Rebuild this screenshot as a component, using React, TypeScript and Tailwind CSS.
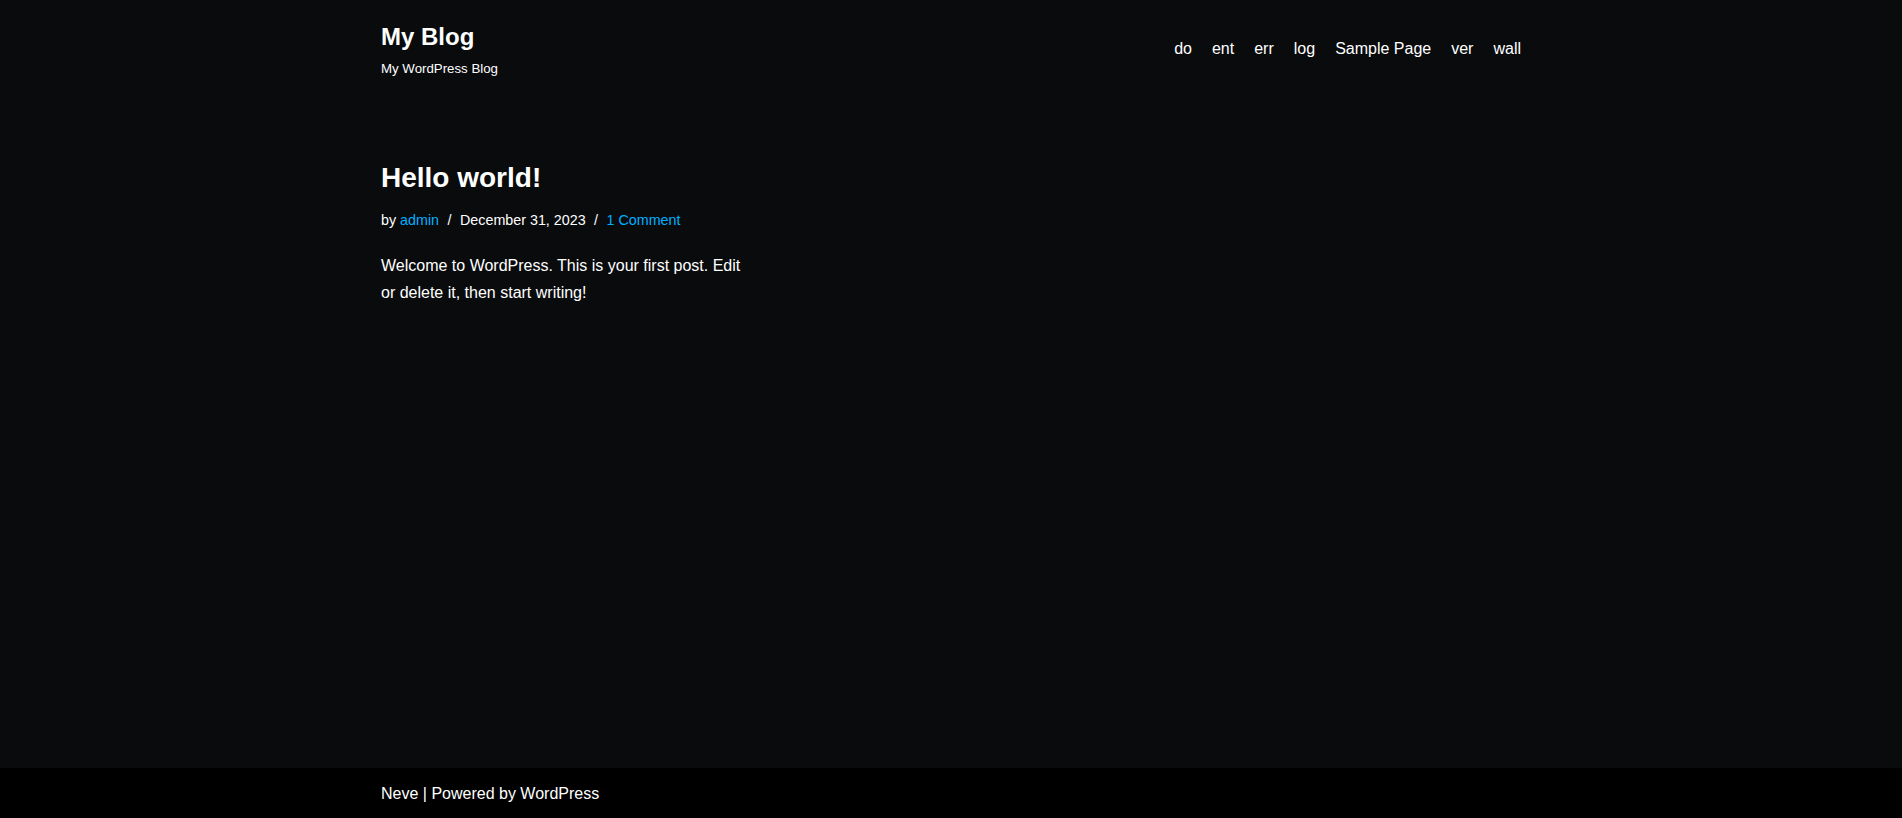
const font = "font-['Liberation_Sans',Arial,sans-serif]";

export default function App() {
  return (
    <div className={`flex h-[818px] flex-col bg-[#090b0d] text-white ${font}`}>
      <header className="mx-auto flex w-[1170px] items-center justify-between px-[15px] pt-[21px]">
        <div>
          <p className="text-[24px] font-bold leading-[32px]">My Blog</p>
          <p className="mt-[6px] text-[13.28px] leading-[20px]">My WordPress Blog</p>
        </div>
        <nav className="-mt-[2px] flex gap-5 text-[16px] leading-[24px]">
          <a>do</a>
          <a>ent</a>
          <a>err</a>
          <a>log</a>
          <a>Sample Page</a>
          <a>ver</a>
          <a>wall</a>
        </nav>
      </header>

      <main className="mx-auto w-[1170px] flex-1 px-[15px] pt-[82px]">
        <div className="w-[375px]">
          <h1 className="text-[28px] font-bold leading-[34px]">Hello world!</h1>
          <p className="mt-[14px] text-[14.3px] leading-[22px]">
            by <a className="text-[#00b0ff]">admin</a>
            <span className="mx-[8.5px]">/</span>December 31, 2023
            <span className="mx-[8.5px]">/</span>
            <a className="text-[#00b0ff]">1 Comment</a>
          </p>
          <p className="mt-[21px] text-[16px] leading-[27.2px]">
            Welcome to WordPress. This is your first post. Edit or delete it, then start writing!
          </p>
        </div>
      </main>

      <footer className="h-[50px] bg-black">
        <div className="mx-auto w-[1170px] px-[15px] pt-[1px] text-[16px] leading-[50px]">Neve | Powered by WordPress</div>
      </footer>
    </div>
  );
}
